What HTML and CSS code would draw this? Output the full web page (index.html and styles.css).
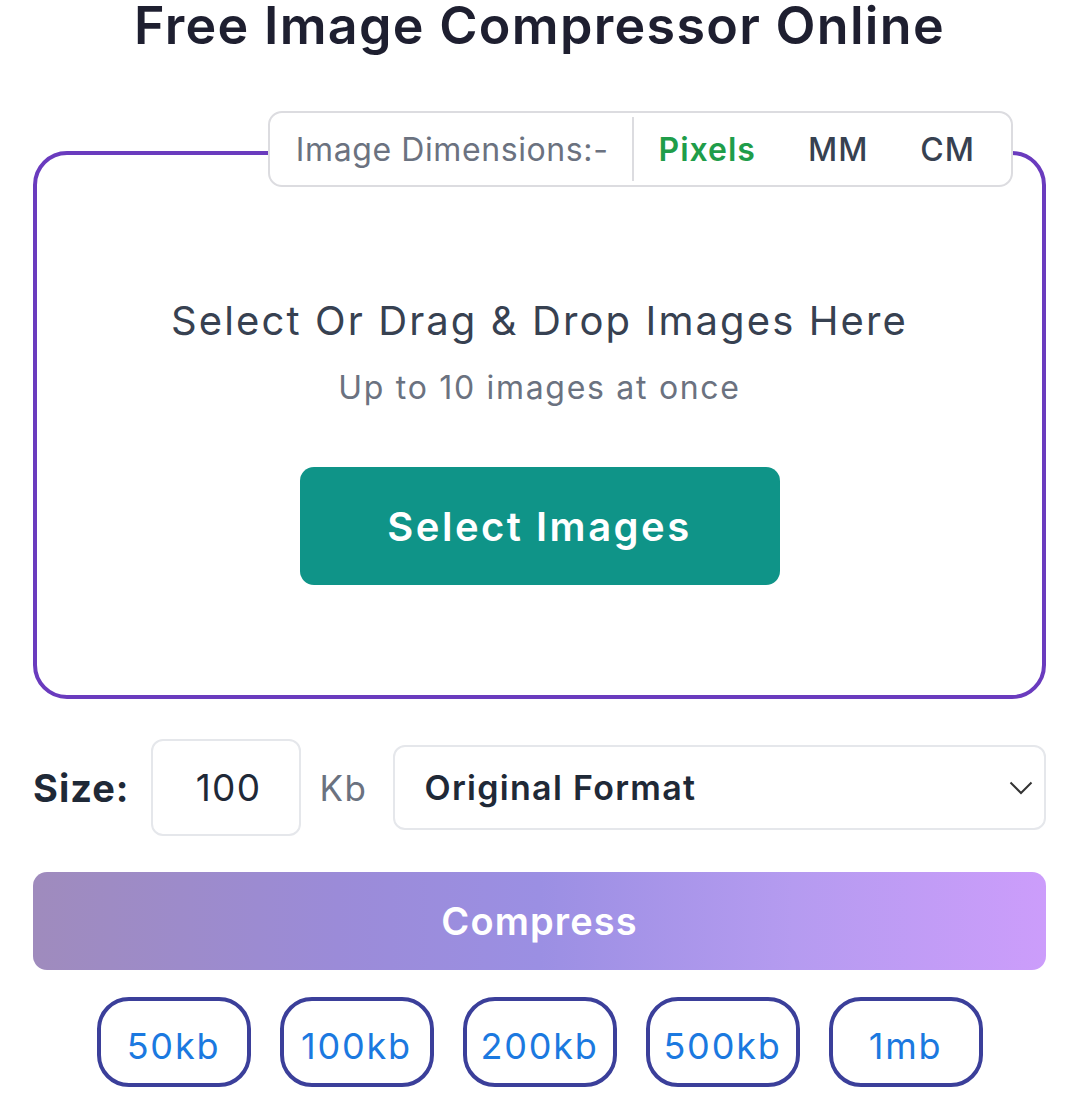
FILE: index.html
```html
<!DOCTYPE html>
<html lang="en">
<head>
<meta charset="utf-8">
<title>Free Image Compressor Online</title>
<link rel="stylesheet" href="styles.css">
</head>
<body>
<main class="page">
  <h1 class="title">Free Image Compressor Online</h1>

  <section class="dropzone">
    <div class="units">
      <span class="units-label">Image Dimensions:-</span>
      <span class="units-divider"></span>
      <span class="unit unit-active">Pixels</span>
      <span class="unit">MM</span>
      <span class="unit">CM</span>
    </div>
    <p class="drop-title">Select Or Drag &amp; Drop Images Here</p>
    <p class="drop-sub">Up to 10 images at once</p>
    <button class="select-btn" type="button">Select Images</button>
  </section>

  <div class="options">
    <span class="size-label">Size:</span>
    <input class="size-input" type="text" value="100">
    <span class="size-unit">Kb</span>
    <div class="format-select">
      <span class="format-text">Original Format</span>
      <svg class="chevron" width="24" height="14" viewBox="0 0 24 14"><path d="M1.5 1.5 L12 12 L22.5 1.5" fill="none" stroke="#333" stroke-width="2"/></svg>
    </div>
  </div>

  <button class="compress-btn" type="button">Compress</button>

  <div class="presets">
    <button class="preset" type="button">50kb</button>
    <button class="preset" type="button">100kb</button>
    <button class="preset" type="button">200kb</button>
    <button class="preset" type="button">500kb</button>
    <button class="preset" type="button">1mb</button>
  </div>
</main>
</body>
</html>
```

FILE: styles.css
```css
* { box-sizing: border-box; }

body {
  margin: 0;
  background: #ffffff;
  font-family: Inter, "Noto Sans", "Liberation Sans", sans-serif;
}

.page {
  width: 1077px;
  padding: 0 31px 0 33px;
}

.title {
  margin: 0;
  font-size: 52px;
  line-height: 52px;
  font-weight: 600;
  color: #1e1f30;
  text-align: center;
  letter-spacing: 1.3px;
}

.dropzone {
  position: relative;
  margin-top: 99px;
  height: 548px;
  border: 4px solid #6a3bbe;
  border-radius: 34px;
  display: flex;
  flex-direction: column;
  align-items: center;
  padding-top: 143px;
}

.units {
  position: absolute;
  top: -44px;
  right: 29px;
  height: 76px;
  display: flex;
  align-items: center;
  background: #ffffff;
  border: 2px solid #dcdce0;
  border-radius: 14px;
  padding: 0 10px 0 26px;
  font-size: 32px;
}

.units-label {
  color: #6b7280;
  font-weight: 400;
  padding-right: 23px;
  letter-spacing: 0.6px;
}

.units-divider {
  width: 2px;
  height: 64px;
  background: #dcdce0;
}

.unit {
  padding: 0 26px;
  color: #374151;
  font-weight: 500;
  letter-spacing: 1px;
}

.unit-active {
  color: #1f9d4a;
  font-weight: 600;
  padding-left: 25px;
}

.drop-title {
  margin: 0;
  font-size: 40px;
  line-height: 46px;
  font-weight: 400;
  color: #374151;
  letter-spacing: 2.1px;
}

.drop-sub {
  margin: 24px 0 0;
  font-size: 32px;
  line-height: 40px;
  color: #6b7280;
  letter-spacing: 1.7px;
}

.select-btn {
  margin-top: 59px;
  width: 480px;
  height: 118px;
  border: none;
  border-radius: 14px;
  background: #0f9488;
  color: #ffffff;
  font-family: inherit;
  font-size: 40px;
  font-weight: 600;
  letter-spacing: 2.5px;
}

.options {
  margin-top: 40px;
  display: flex;
  align-items: center;
  height: 97px;
}

.size-label {
  font-size: 38px;
  font-weight: 700;
  color: #1f2937;
  letter-spacing: 1px;
}

.size-input {
  margin-left: 21px;
  width: 150px;
  height: 97px;
  border: 2px solid #e5e7eb;
  border-radius: 12px;
  text-align: center;
  font-family: inherit;
  font-size: 37px;
  letter-spacing: 1.2px;
  color: #1f2937;
  background: #ffffff;
  outline: none;
  padding: 0 0 0 6px;
}

.size-unit {
  margin-left: 19px;
  font-size: 35px;
  color: #6b7280;
  letter-spacing: 1.5px;
}

.format-select {
  margin-left: 26px;
  flex: 1;
  height: 85px;
  border: 2px solid #e5e7eb;
  border-radius: 12px;
  display: flex;
  align-items: center;
  justify-content: space-between;
  padding: 0 11px 0 29px;
}

.format-text {
  font-size: 34px;
  font-weight: 600;
  color: #1f2937;
  letter-spacing: 1.3px;
}

.chevron { display: block; }

.compress-btn {
  margin-top: 36px;
  width: 100%;
  height: 98px;
  border: none;
  border-radius: 14px;
  background: linear-gradient(90deg, #9f8bbd 0%, #9b8bd8 30%, #9b8fe3 50%, #b59bf0 75%, #cc9dfb 100%);
  color: #ffffff;
  font-family: inherit;
  font-size: 38px;
  font-weight: 600;
  letter-spacing: 1.1px;
}

.presets {
  margin-top: 27px;
  display: flex;
  justify-content: center;
  gap: 29px;
}

.preset {
  width: 154px;
  height: 90px;
  border: 4px solid #3b3f9a;
  border-radius: 32px;
  background: #ffffff;
  color: #1b79e0;
  font-family: inherit;
  font-size: 36px;
  font-weight: 400;
  letter-spacing: 1.8px;
  padding: 7px 0 0;
}
```
